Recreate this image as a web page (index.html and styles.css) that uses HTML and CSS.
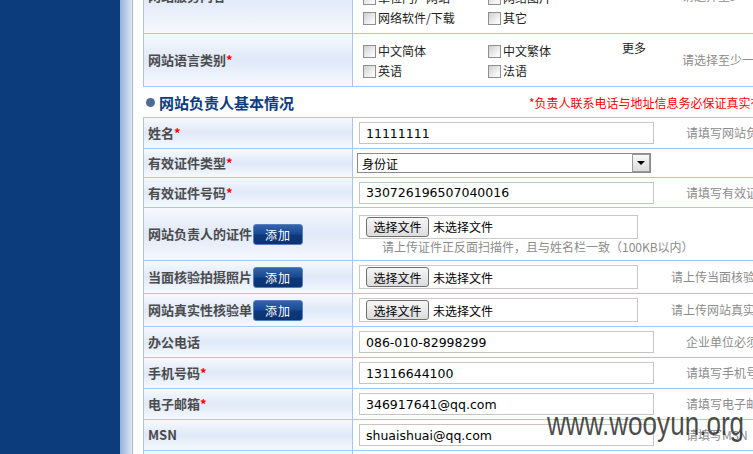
FILE: index.html
```html
<!DOCTYPE html>
<html lang="zh-CN">
<head>
    <meta charset="UTF-8">
    <title>网站负责人基本情况</title>
    <link rel="stylesheet" href="styles.css">
</head>
<body>
<div class="page">
    <div class="sidebar"></div>
    <div class="shade"></div>
    <div class="main">
        <!-- 网站信息 -->
        <div class="form-table">
            <div class="row row-service">
                <div class="label">网站服务内容</div>
                <div class="value value-checks">
                    <div class="checks">
                        <label class="check"><input type="checkbox">综合门户</label>
                        <label class="check"><input type="checkbox">搜索引擎</label>
                        <label class="check"><input type="checkbox">单位门户网站</label>
                        <label class="check"><input type="checkbox">网络图片</label>
                        <label class="check"><input type="checkbox">网络软件/下载</label>
                        <label class="check"><input type="checkbox">其它</label>
                    </div>
                    <span class="hint hint-checks hint-wide">请选择至少一项服务内容</span>
                </div>
            </div>
            <div class="row row-lang">
                <div class="label">网站语言类别<span class="req">*</span></div>
                <div class="value value-checks">
                    <div class="checks">
                        <label class="check"><input type="checkbox">中文简体</label>
                        <label class="check"><input type="checkbox">中文繁体</label>
                        <label class="check"><input type="checkbox">英语</label>
                        <label class="check"><input type="checkbox">法语</label>
                    </div>
                    <span class="more">更多</span>
                    <span class="hint hint-checks">请选择至少一种语言</span>
                </div>
            </div>
        </div>

        <div class="section-title">
            <span class="bullet"></span>
            <span class="title-text">网站负责人基本情况</span>
            <span class="note">*负责人联系电话与地址信息务必保证真实有效</span>
        </div>

        <!-- 负责人信息 -->
        <div class="form-table">
            <div class="row">
                <div class="label">姓名<span class="req">*</span></div>
                <div class="value">
                    <input class="text-input" type="text" value="11111111">
                    <span class="hint">请填写网站负责人姓名</span>
                </div>
            </div>
            <div class="row row-select">
                <div class="label">有效证件类型<span class="req">*</span></div>
                <div class="value">
                    <div class="select-wrap">
                        <select class="select">
                            <option>身份证</option>
                            <option>护照</option>
                        </select>
                        <span class="select-arrow"></span>
                    </div>
                </div>
            </div>
            <div class="row row-id">
                <div class="label">有效证件号码<span class="req">*</span></div>
                <div class="value">
                    <input class="text-input" type="text" value="330726196507040016">
                    <span class="hint">请填写有效证件号码</span>
                </div>
            </div>
            <div class="row row-cert">
                <div class="label">网站负责人的证件<button class="add-btn">添加</button></div>
                <div class="value">
                    <div class="file-stack">
                        <div class="file-box"><button class="file-btn">选择文件</button><span class="file-name">未选择文件</span></div>
                        <div class="sub-hint">请上传证件正反面扫描件，且与姓名栏一致（100KB以内）</div>
                    </div>
                </div>
            </div>
            <div class="row row-file">
                <div class="label">当面核验拍摄照片<button class="add-btn">添加</button></div>
                <div class="value">
                    <div class="file-box"><button class="file-btn">选择文件</button><span class="file-name">未选择文件</span></div>
                    <span class="hint hint-file">请上传当面核验拍摄照片</span>
                </div>
            </div>
            <div class="row row-file">
                <div class="label">网站真实性核验单<button class="add-btn">添加</button></div>
                <div class="value">
                    <div class="file-box"><button class="file-btn">选择文件</button><span class="file-name">未选择文件</span></div>
                    <span class="hint hint-file">请上传网站真实性核验单</span>
                </div>
            </div>
            <div class="row">
                <div class="label">办公电话</div>
                <div class="value">
                    <input class="text-input" type="text" value="086-010-82998299">
                    <span class="hint">企业单位必须填写办公电话</span>
                </div>
            </div>
            <div class="row">
                <div class="label">手机号码<span class="req">*</span></div>
                <div class="value">
                    <input class="text-input" type="text" value="13116644100">
                    <span class="hint">请填写手机号码</span>
                </div>
            </div>
            <div class="row">
                <div class="label">电子邮箱<span class="req">*</span></div>
                <div class="value">
                    <input class="text-input" type="text" value="346917641@qq.com">
                    <span class="hint">请填写电子邮箱</span>
                </div>
            </div>
            <div class="row">
                <div class="label">MSN</div>
                <div class="value">
                    <input class="text-input" type="text" value="shuaishuai@qq.com">
                    <span class="hint">请填写MSN</span>
                </div>
            </div>
            <div class="row">
                <div class="label">联系地址<span class="req">*</span></div>
                <div class="value">
                    <input class="text-input" type="text" value="">
                    <span class="hint">请填写联系地址</span>
                </div>
            </div>
        </div>
    </div>
    <div class="watermark">www.wooyun.org</div>
</div>
</body>
</html>
```

FILE: styles.css
```css
html, body {
    margin: 0;
    overflow: hidden;
}

body {
    background-color: #fff;
    color: #000;
    font-family: "Noto Sans CJK SC", sans-serif;
    font-size: 12px;
}

.page {
    position: relative;
    display: flex;
    height: 454px;
}

.sidebar {
    flex: none;
    width: 120px;
    background-color: #0c3c7b;
}

.shade {
    flex: none;
    width: 12px;
    background: linear-gradient(to right, #93b2dc, #dfe8f5);
    border-right: 1px solid #a3b7d5;
}

.main {
    flex: none;
    width: 900px;
    margin-left: 10px;
    margin-top: -42px;
}

/* 表格 */
.form-table {
    border-top: 1px solid #a9c7ee;
    border-left: 1px solid #a9c7ee;
}

.row {
    display: flex;
    height: 30px;
    border-bottom: 1px solid #a9c7ee;
}

.row-service { height: 74px; }
.row-lang { height: 52px; }
.row-select { height: 28px; }
.row-id { height: 29px; }
.row-cert { height: 52px; }
.row-file { height: 32px; }

.label {
    flex: none;
    display: flex;
    align-items: center;
    width: 204px;
    padding-left: 4px;
    border-right: 1px solid #a9c7ee;
    background: linear-gradient(#f6f9fe, #e0e9f8 50%, #f6f9fe);
    color: #4b4b4b;
    font-size: 13px;
    font-weight: bold;
    line-height: 16px;
    white-space: nowrap;
}

.req {
    color: #f00;
}

.value {
    flex: 1;
    display: flex;
    align-items: center;
    padding-left: 6px;
    white-space: nowrap;
}

.hint {
    margin-left: 32px;
    color: #8c8c8c;
    font-size: 12px;
    line-height: 14px;
}

.hint-file {
    margin-left: 33px;
}

/* 复选框 */
.value-checks {
    align-items: flex-start;
    padding-left: 10px;
}

.row-service .value-checks { padding-top: 9px; }
.row-lang .value-checks { padding-top: 7px; }

.checks {
    display: grid;
    grid-template-columns: 125px 125px;
    grid-auto-rows: 20px;
}

.check {
    display: flex;
    align-items: center;
    color: #222;
    font-size: 12px;
    line-height: 14px;
}

.check input {
    appearance: none;
    box-sizing: border-box;
    width: 13px;
    height: 13px;
    margin: 0 2px 0 0;
    border: 1px solid #8f8f8f;
    background: linear-gradient(135deg, #cfcfcf, #f9f9f9 80%);
}

.more {
    width: 60px;
    padding-left: 9px;
    color: #222;
    line-height: 14px;
}

.hint-checks {
    align-self: center;
    margin-left: 0;
}

.row-service .hint-checks {
    margin-left: 69px;
    margin-top: -9px;
}

.row-lang .hint-checks {
    margin-top: -7px;
}

/* 输入框 */
.text-input {
    box-sizing: border-box;
    width: 295px;
    height: 22px;
    margin: 0;
    padding: 0 0 0 6px;
    border: 1px solid #c5c5c5;
    color: #000;
    font-family: "DejaVu Sans", sans-serif;
    font-size: 12.5px;
    outline: none;
}

.select-wrap {
    position: relative;
    width: 294px;
    height: 20px;
    margin-left: -2px;
}

.select {
    appearance: none;
    box-sizing: border-box;
    width: 100%;
    height: 100%;
    margin: 0;
    padding: 0 0 0 4px;
    border: 1px solid #8a8a8a;
    background-color: #fff;
    color: #000;
    font-family: "Noto Sans CJK SC", sans-serif;
    font-size: 12px;
}

.select-arrow {
    position: absolute;
    right: 1px;
    top: 1px;
    box-sizing: border-box;
    width: 18px;
    height: 18px;
    border: 1px solid #9a9a9a;
    background: linear-gradient(#f8f8f8, #dcdcdc);
}

.select-arrow::after {
    content: "";
    position: absolute;
    left: 4px;
    top: 6px;
    border-left: 4px solid transparent;
    border-right: 4px solid transparent;
    border-top: 4px solid #000;
}

/* 文件上传 */
.file-stack {
    display: flex;
    flex-direction: column;
}

.file-box {
    box-sizing: border-box;
    display: flex;
    align-items: center;
    width: 279px;
    height: 24px;
    padding-left: 6px;
    border: 1px solid #c8c8c8;
}

.file-btn {
    box-sizing: border-box;
    width: 63px;
    height: 20px;
    padding: 0;
    border: 1px solid #707070;
    border-radius: 3px;
    background: linear-gradient(#f6f6f6, #dcdcdc);
    color: #000;
    font-family: "Noto Sans CJK SC", sans-serif;
    font-size: 12px;
}

.file-name {
    margin-left: 4px;
    font-size: 12px;
}

.sub-hint {
    margin: 1px 0 0 23px;
    color: #8c8c8c;
    font-size: 12px;
    line-height: 14px;
}

.add-btn {
    box-sizing: border-box;
    width: 50px;
    height: 21px;
    margin-left: 1px;
    padding: 0;
    border: 1px solid #5580bd;
    border-radius: 3px;
    background: linear-gradient(#3363ab, #1a4a92 45%, #0d387a 55%, #0b3370);
    color: #fff;
    font-family: "Noto Sans CJK SC", sans-serif;
    font-size: 12px;
    letter-spacing: 1px;
}

/* 标题 */
.section-title {
    display: flex;
    align-items: center;
    height: 30px;
    white-space: nowrap;
}

.bullet {
    width: 9px;
    height: 9px;
    margin: 0 4px 0 3px;
    border-radius: 50%;
    background-color: #4e6b94;
}

.title-text {
    color: #0d3b7d;
    font-size: 15px;
    font-weight: bold;
}

.note {
    margin-left: 235px;
    color: #f00;
    font-size: 12px;
}

.watermark {
    position: absolute;
    left: 547px;
    top: 407px;
    color: rgba(45, 45, 45, 0.85);
    font-family: "Liberation Sans", sans-serif;
    font-size: 33px;
    line-height: 33px;
    white-space: nowrap;
    transform: scaleX(0.79);
    transform-origin: left top;
    pointer-events: none;
}
```
